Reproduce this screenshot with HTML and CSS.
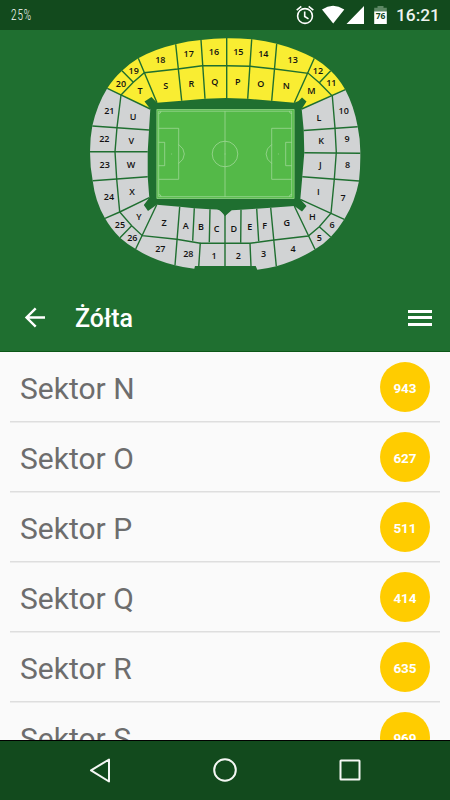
FILE: index.html
```html
<!DOCTYPE html>
<html lang="pl">
<head>
<meta charset="utf-8">
<title>Żółta</title>
<link rel="stylesheet" href="styles.css">
</head>
<body>
<div class="status">
  <span class="percent">25%</span>
  <svg class="status-icons" width="96" height="30" viewBox="294 0 96 30">
    <g fill="none" stroke="#fff" stroke-width="1.6"><circle cx="305" cy="16" r="7.4"/><path d="M304.7 11.5v5l3.8 2.4M296.700 10.200l4.600-3.900M308.700 6.300l4.600 3.900"/></g>
    <path fill="#fff" d="M322 9.400Q333 2.200 344.300 9.400L333.200 23.600ZM364 6v18h-17.500Z"/>
    <path fill="#5d8764" d="M377.500 6h6v1.800h3.300V12h-12.600V7.800h3.300Z"/>
    <path fill="#fff" d="M374.200 11.500h12.600v12.500h-12.600Z"/>
    <text class="battery" x="380.500" y="18.500">76</text>
  </svg>
  <span class="time">16:21</span>
</div>
<header class="header">
  <svg class="stadium" width="450" height="250" viewBox="0 30 450 250">
    <path class="yellow" d="M107.300 88.300Q113 79 122 70.700Q129 64 138.300 58.300Q155 49 175.700 44.300Q188 41 201 40Q214 38.300 226.700 38.300Q239 38.200 251.700 39.300Q264 40.500 276.700 43.700Q297 49 314.300 58.300Q323 63.500 330.700 70.700Q339 78.500 345.300 89.700L301.700 109L306.500 101.500L302 97.500L298.500 101L294.300 102.700L271.700 100.700L247.700 98.700L226 98L205 98.700L181.700 100.700L157 102.700L151.500 97L144.500 101.500L150.300 109Z"/>
    <path class="grey" d="M107.300 88.300L150.300 109L149 130L147.700 152L147.700 176.700L149.300 197.700L143.800 205L148 211L156.700 204.700L179.700 206.700L194.300 208.300L210 209.300L217 209.500Q222 210.500 225 216L231.700 210.300L241 209.700L256.700 208.700L270.700 207.700L294.300 206L302 211.500L306.500 206L300.300 199.300L302.300 176.700L304.300 152.700L303.700 130L301.700 109L345.300 89.700Q354 106 357.700 126.700Q360.500 140 360.300 153.300Q360.500 168 359 181Q355 202 344.300 219.300Q338.500 229 330.700 237Q324 244 315 249.300Q298 260 276.300 266.300Q267 268.700 257.300 269.700L255.700 266H195L194.300 268.700Q184 267.700 175 265.300Q153 260 135.700 249Q127 244 120 237.700Q111 229 105 218.300Q95 201 92.700 180.700Q90 167 90 151.700Q90 138 92.300 126Q97 105 107.300 88.300Z"/>
    <g class="gaps">
      <path d="M107.300 88.300L150.300 109M345.300 89.700L301.700 109M149.300 197.700L119.700 212L105 218.300M300.300 199.300L331 213.300L344.300 219.300"/>
      <path d="M121 95L133.300 82.300L144.300 72.700L177.700 69L202.300 65.700H226.700L250.300 66.300L275 69L308.300 73.300L319.300 82.700L332.300 96L335 128L336.300 152.300L334.300 179.300L331 213.300L319.300 226.700L308.300 236L274 240L250 243.300H200.300L176.700 239.300L142.300 235.700L131.700 225.700L119.700 212L116.700 179.300L115 151.700L117 127.300Z"/>
      <path d="M122 70.700L133.300 82.300M138.300 58.300L157 102.700M175.700 44.300L181.700 100.700M201 40L205 98.700M226.700 38V98M251.700 39.300L247.700 98.700M276.700 43.700L271.700 100.700M314.300 58.300L294.300 102.700M330.700 70.700L319.300 82.700"/>
      <path d="M357.700 126.700L303.700 130.500M360.300 153.300L304.300 152.700M359 181L302.300 176.700M330.700 237L319.300 226.700M315 249.300L294.300 206M276.300 266.300L270.700 207.700M251 266L250 243.300M258.700 241.300L256.700 208.700M240.700 242.700L241 209.700M225 266V214M209.300 242.300L210 209.300M192.700 240.700L194.300 208.300M198.700 267L200.300 242.700M175 265.300L179.700 206.700M135.700 249L156.700 204.700M120 237.700L131.700 225.700M92.700 180.700L147.700 176.700M90 151.700H147.700M92.300 126L149 130"/>
    </g>
    <path fill="#1f6f30" d="M219 209h12l-6 7Z"/>
    <path fill="#54b948" d="M156.700 109.300h137.600v89.400H156.700Z"/>
    <g class="field">
      <path stroke="#99d58c" d="M156.900 109.500h137.200v89H156.900Z"/>
      <path d="M158.700 111.200h133v85.500h-133ZM225 111.200v85.500M158.700 128.300h20v51h-20M158.700 142.300h6v23.400h-6M291.700 128.300h-20v51h20M291.700 142.300h-6v23.400h6M178.700 144.500q5.600 4 5.600 9.500t-5.600 9.500M271.700 144.500q-5.600 4-5.600 9.500t5.600 9.500M158.700 113.500q2.300 0 2.300-2.300M291.700 113.500q-2.300 0-2.300-2.300M158.700 194.400q2.300 0 2.300 2.300M291.700 194.400q-2.300 0-2.300 2.300"/>
      <circle cx="225" cy="154" r="12.800"/>
      <path d="M171.200 154h.9M277.900 154h.9M224.600 154h.9"/>
    </g>
    <g class="labels">
      <text x="160.300" y="62.900">18</text><text x="188.700" y="57.200">17</text><text x="214" y="55.200">16</text><text x="238.300" y="54.900">15</text><text x="263.300" y="57.200">14</text><text x="292.700" y="62.500">13</text><text x="318" y="74.200">12</text><text x="331.300" y="86.200">11</text><text x="343.700" y="113.900">10</text><text x="347" y="142.200">9</text><text x="347.700" y="168.200">8</text><text x="343" y="200.500">7</text><text x="332" y="228.200">6</text><text x="319.300" y="241.200">5</text><text x="293" y="252.200">4</text><text x="263.700" y="257.200">3</text><text x="238.300" y="258.500">2</text><text x="214" y="258.500">1</text><text x="188.300" y="257.200">28</text><text x="160.300" y="252.200">27</text><text x="132.300" y="241.200">26</text><text x="120" y="228.200">25</text><text x="109" y="199.900">24</text><text x="104.700" y="168.200">23</text><text x="104.300" y="142.200">22</text><text x="109.300" y="113.900">21</text><text x="121" y="86.500">20</text><text x="133.700" y="74.200">19</text>
      <text x="140" y="93.500">T</text><text x="165.700" y="88.500">S</text><text x="191.300" y="86.500">R</text><text x="214.700" y="84.500">Q</text><text x="237.700" y="84.500">P</text><text x="260.700" y="86.500">O</text><text x="286.300" y="88.500">N</text><text x="311.300" y="93.500">M</text><text x="319" y="120.500">L</text><text x="321" y="143.500">K</text><text x="320.300" y="167.900">J</text><text x="318.300" y="194.900">I</text><text x="312.300" y="219.500">H</text><text x="286.700" y="225.500">G</text><text x="264.700" y="229.200">F</text><text x="249.700" y="230.200">E</text><text x="233.700" y="231.900">D</text><text x="216.700" y="231.500">C</text><text x="201" y="230.200">B</text><text x="185.700" y="229.200">A</text><text x="164" y="225.500">Z</text><text x="139" y="219.500">Y</text><text x="132" y="194.500">X</text><text x="131" y="167.900">W</text><text x="131.300" y="143.500">V</text><text x="133" y="120.200">U</text>
    </g>
  </svg>
  <div class="toolbar">
    <svg width="22" height="22" viewBox="24 307 22 22"><path d="M45 317.500H27M35.700 308.300L26.500 317.500L35.700 326.700" fill="none" stroke="#fff" stroke-width="2.400"/></svg>
    <h1 class="title">Żółta</h1>
    <div class="menu"><i></i><i></i><i></i></div>
  </div>
</header>
<main class="list">
  <div class="row"><span>Sektor N</span><b class="badge">943</b></div>
  <div class="row"><span>Sektor O</span><b class="badge">627</b></div>
  <div class="row"><span>Sektor P</span><b class="badge">511</b></div>
  <div class="row"><span>Sektor Q</span><b class="badge">414</b></div>
  <div class="row"><span>Sektor R</span><b class="badge">635</b></div>
  <div class="row"><span>Sektor S</span><b class="badge">969</b></div>
</main>
<nav class="nav">
  <svg width="450" height="59" viewBox="0 741 450 59" fill="none" stroke="#f4f7f4" stroke-width="2" stroke-linejoin="round"><path d="M109 759.500V781.500L91 770.300Z"/><circle cx="225" cy="770" r="10.800"/><rect x="340.500" y="760.500" width="19" height="19" rx=".5"/></svg>
</nav>
</body>
</html>
```

FILE: styles.css
```css
* { box-sizing: border-box; }
body {
  margin: 0;
  width: 450px;
  height: 800px;
  overflow: hidden;
  display: flex;
  flex-direction: column;
  background: #fafafa;
  font-family: Roboto, sans-serif;
}
svg { display: block; flex: none; }
.status {
  height: 30px;
  flex: none;
  display: flex;
  align-items: center;
  background: #124a1d;
  color: #fff;
  padding-left: 11px;
}
.percent {
  width: 283px;
  font-size: 15.5px;
  font-weight: 300;
  line-height: 32px;
  letter-spacing: 1.4px;
  transform: scaleX(.64);
  transform-origin: left;
}
.battery {
  font: 700 8.5px "Open Sans", sans-serif;
  text-anchor: middle;
  fill: #124a1d;
}
.time {
  margin-left: 6px;
  font-size: 17.3px;
  font-weight: 500;
  line-height: 32px;
  color: #eef3ef;
}
.header {
  height: 322px;
  flex: none;
  background: #1f6f30;
  border-bottom: 1px solid #0b5717;
}
.yellow { fill: #f9ed32; }
.grey { fill: #d1d3d4; }
.gaps { fill: none; stroke: #1f6f30; stroke-width: 1.4; }
.field { fill: none; stroke: #a9dba0; stroke-width: .7; }
.labels {
  font: 600 9px "Open Sans", sans-serif;
  text-anchor: middle;
  fill: #111;
}
.toolbar {
  height: 71px;
  padding: 4px 18px 0 24px;
  display: flex;
  align-items: center;
}
.title {
  margin: 0 0 0 29px;
  padding-top: 2px;
  font-size: 25px;
  font-weight: 500;
  line-height: 30px;
  color: #fff;
}
.menu {
  width: 24px;
  margin-left: auto;
  display: grid;
  gap: 3.5px;
}
.menu i { height: 3px; background: #fff; }
.list {
  height: 388px;
  flex: none;
  overflow: hidden;
  padding: 0 10px;
}
.row {
  height: 70px;
  padding: 1px 10px 0;
  display: flex;
  align-items: center;
  justify-content: space-between;
  border-bottom: 1px solid #dedede;
  box-shadow: 0 1px #ececec;
  font-size: 30px;
  color: #6d6d6d;
}
.row span { padding-top: 2px; }
.badge {
  width: 50px;
  height: 50px;
  border-radius: 50%;
  background: #fc0;
  color: #fff;
  font-size: 13.5px;
  line-height: 52px;
  text-align: center;
}
.nav {
  height: 60px;
  flex: none;
  background: #124a1d;
  border-top: 1px solid #000;
}
```
